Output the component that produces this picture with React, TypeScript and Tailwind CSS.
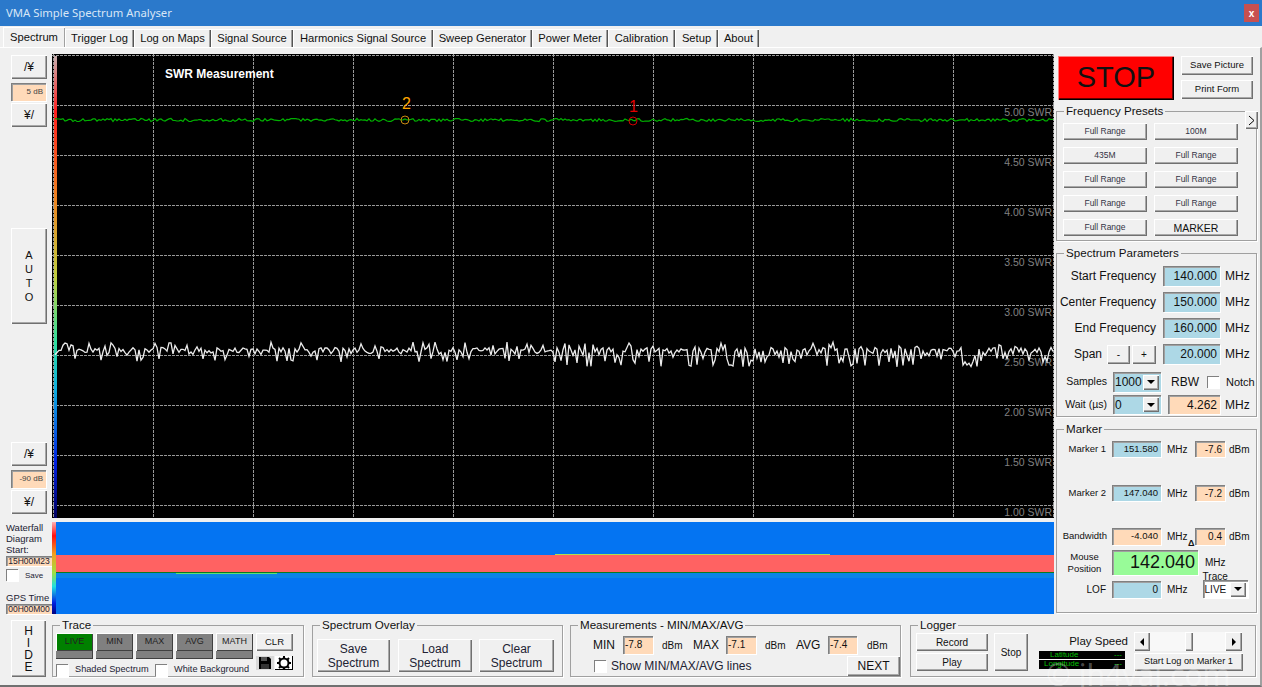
import React from 'react';

const bevel = 'bg-[#f0f0f0] shadow-[inset_1px_1px_0_#fff,inset_-1px_-1px_0_#707070,inset_-2px_-2px_0_#a8a8a8] flex items-center justify-center text-center';
const sunken = 'shadow-[inset_1px_1px_0_#808080,inset_2px_2px_0_#a0a0a0,1px_1px_0_#fff]';

const tabs = [
  { label: 'Trigger Log', width: 'w-[69px]' },
  { label: 'Log on Maps', width: 'w-[77px]' },
  { label: 'Signal Source', width: 'w-[82px]' },
  { label: 'Harmonics Signal Source', width: 'w-[140px]' },
  { label: 'Sweep Generator', width: 'w-[99px]' },
  { label: 'Power Meter', width: 'w-[76px]' },
  { label: 'Calibration', width: 'w-[67px]' },
  { label: 'Setup', width: 'w-[43px]' },
  { label: 'About', width: 'w-[41px]' },
];

const presets = ['Full Range', '100M', '435M', 'Full Range', 'Full Range', 'Full Range', 'Full Range', 'Full Range', 'Full Range', 'MARKER'];

const gridX = [1, 101, 201, 301, 401, 501, 601, 701, 801, 901, 1001];
const gridY = [1, 51, 101, 151, 201, 251, 301, 351, 401, 451];
const swr = ['5.00', '4.50', '4.00', '3.50', '3.00', '2.50', '2.00', '1.50', '1.00'];

// seeded noise so the traces stay the same on every render
function makeNoise(seed: number) {
  let s = seed;
  return () => {
    s = (s * 16807) % 2147483647;
    return s / 2147483647;
  };
}

function greenTrace() {
  const r = makeNoise(77);
  const pts: string[] = [];
  for (let x = 3; x <= 1001; x += 2) pts.push(`${x},${(66 + (r() - 0.5) * 3).toFixed(1)}`);
  return pts.join(' ');
}

function whiteTrace() {
  const r = makeNoise(4242);
  const pts: string[] = [];
  for (let x = 3; x <= 1001; x += 2) {
    const heavy = x > 500 ? 0.42 : 0.24;
    const k = r();
    let y = 296 + (r() - 0.5) * 5;
    if (k < heavy) y = 298 + r() * (x > 500 ? 15 : 10);
    else if (k > 0.88) y = 293 - r() * 5;
    pts.push(`${x},${y.toFixed(1)}`);
  }
  return pts.join(' ');
}

const greenPts = greenTrace();
const whitePts = whiteTrace();

function Btn({ className = '', children }: { className?: string; children: React.ReactNode }) {
  return <div className={`${bevel} ${className}`}>{children}</div>;
}

function Field({ className = '', children }: { className?: string; children?: React.ReactNode }) {
  return <div className={`${sunken} flex items-center justify-end pr-[3px] ${className}`}>{children}</div>;
}

function Check({ className = '' }: { className?: string }) {
  return <div className={`w-[12px] h-[12px] bg-white shrink-0 shadow-[inset_1px_1px_0_#808080,1px_1px_0_#fff] ${className}`} />;
}

function Group({ title, className = '', children }: { title: string; className?: string; children: React.ReactNode }) {
  return (
    <fieldset className={`border border-[#a0a0a0] shadow-[1px_1px_0_#fff] min-w-0 shrink-0 ${className}`}>
      <legend className="ml-[7px] px-[2px] text-[11.6px] leading-[14px] text-[#111]">{title}</legend>
      {children}
    </fieldset>
  );
}

function Arrow({ dir }: { dir: 'down' | 'left' | 'right' }) {
  const pts = dir === 'down' ? '0,0 8,0 4,4' : dir === 'left' ? '5,0 5,8 1,4' : '1,0 1,8 5,4';
  return (
    <svg width={dir === 'down' ? 8 : 6} height={dir === 'down' ? 4 : 8}>
      <polygon points={pts} fill="#000" />
    </svg>
  );
}

function Combo({ value, bg, className = '' }: { value: string; bg: string; className?: string }) {
  return (
    <div className={`${sunken} ${bg} flex items-center pl-[2px] pr-[2px] shrink-0 ${className}`}>
      <span className="flex-1">{value}</span>
      <Btn className="w-[16px] h-[15px]">
        <Arrow dir="down" />
      </Btn>
    </div>
  );
}

function Stepper({ value }: { value: string }) {
  return (
    <div className="flex flex-col ml-[11px] w-[36px]">
      <Btn className="h-[24px] text-[12px]">/¥</Btn>
      <div className={`${sunken} mt-[4px] h-[18px] w-[35px] bg-[#ffdab9] flex items-center justify-end pr-[3px] text-[8px] text-[#444]`}>{value}</div>
      <Btn className="h-[24px] mt-[2px] text-[12px]">¥/</Btn>
    </div>
  );
}

function Chart() {
  return (
    <svg width={1002} height={464} className="block bg-black">
      <defs>
        <linearGradient id="scale" x1="0" y1="0" x2="0" y2="1">
          <stop offset="0" stopColor="#c8b0b0" />
          <stop offset="0.12" stopColor="#ff2020" />
          <stop offset="0.3" stopColor="#f08020" />
          <stop offset="0.48" stopColor="#c0d040" />
          <stop offset="0.62" stopColor="#30e0a0" />
          <stop offset="0.72" stopColor="#10b0e0" />
          <stop offset="0.88" stopColor="#0020e0" />
          <stop offset="1" stopColor="#000060" />
        </linearGradient>
      </defs>
      {gridX.map(x => (
        <line key={x} x1={x + 0.5} y1={0} x2={x + 0.5} y2={464} stroke="#989898" strokeDasharray="3 1" />
      ))}
      {gridY.map(y => (
        <line key={y} x1={0} y1={y + 0.5} x2={1002} y2={y + 0.5} stroke="#989898" strokeDasharray="3 1" />
      ))}
      <rect x={2} y={2} width={3} height={462} fill="url(#scale)" />
      {swr.map((v, i) => (
        <text key={v} x={1000} y={62 + i * 50} textAnchor="end" fontSize={10.5} fill="#808080" fontFamily="Liberation Sans">
          {v} SWR
        </text>
      ))}
      <polyline points={whitePts} fill="none" stroke="#ececec" strokeWidth={1.3} />
      <polyline points={greenPts} fill="none" stroke="#00b000" strokeWidth={1.2} />
      <text x={113} y={24} fontSize={12} fontWeight={700} fill="#fff" fontFamily="Liberation Sans">SWR Measurement</text>
      <circle cx={353} cy={66} r={4} fill="none" stroke="#c88a10" />
      <text x={350} y={55} fontSize={16} fill="#ffa500" fontFamily="Liberation Sans">2</text>
      <circle cx={581} cy={67} r={4} fill="none" stroke="#d00000" />
      <text x={577} y={58} fontSize={16} fill="#e00000" fontFamily="Liberation Sans">1</text>
    </svg>
  );
}

function Waterfall() {
  return (
    <svg width={1002} height={92} className="block">
      <defs>
        <linearGradient id="scale2" x1="0" y1="0" x2="0" y2="1">
          <stop offset="0" stopColor="#ffb0b0" />
          <stop offset="0.15" stopColor="#ff1010" />
          <stop offset="0.35" stopColor="#f0a020" />
          <stop offset="0.55" stopColor="#a0e040" />
          <stop offset="0.7" stopColor="#20e0e0" />
          <stop offset="0.88" stopColor="#0020e0" />
          <stop offset="1" stopColor="#000080" />
        </linearGradient>
      </defs>
      <rect x={0} y={0} width={1002} height={92} fill="#0474f2" />
      <rect x={0} y={33} width={1002} height={17} fill="#ff6262" />
      <rect x={0} y={50} width={1002} height={1} fill="#0a7a20" />
      <rect x={0} y={51} width={1002} height={5} fill="#0c84e8" />
      <rect x={124} y={51} width={101} height={1} fill="#60e070" />
      <rect x={503} y={32} width={275} height={1} fill="#b0e050" />
      <rect x={0} y={0} width={4} height={92} fill="url(#scale2)" />
    </svg>
  );
}

function Floppy() {
  return (
    <svg width={14} height={14} viewBox="0 0 14 14">
      <path d="M1 1h10l2 2v10H1z" fill="#000" />
      <rect x={3} y={1} width={6} height={4} fill="#555" />
      <rect x={3} y={8} width={8} height={5} fill="#333" />
    </svg>
  );
}

function Gear() {
  return (
    <svg width={16} height={14} viewBox="0 0 16 14">
      <g stroke="#000" strokeWidth={2}>
        <line x1={8} y1={0} x2={8} y2={14} />
        <line x1={1} y1={7} x2={15} y2={7} />
        <line x1={3} y1={2} x2={13} y2={12} />
        <line x1={13} y1={2} x2={3} y2={12} />
      </g>
      <circle cx={8} cy={7} r={4.5} fill="#fff" stroke="#000" strokeWidth={2} />
    </svg>
  );
}

function TraceBtn({ label, top }: { label: string; top: string }) {
  return (
    <div className="w-[37px] flex flex-col">
      <div className={`h-[18px] ${top} flex items-center justify-center text-[9px] text-[#222] shadow-[inset_1px_1px_0_#fff,inset_-1px_-1px_0_#404040]`}>{label}</div>
      <div className="h-[8px] bg-[#808080] shadow-[inset_-1px_-1px_0_#404040]" />
    </div>
  );
}

export default function App() {
  return (
    <div className="relative w-[1262px] h-[687px] overflow-hidden bg-[#f0f0f0] text-[#111] font-['Liberation_Sans',Arial,sans-serif] flex flex-col">
      <div className="h-[26px] shrink-0 bg-[#2b79cb] flex items-center justify-between pl-[6px] pr-[3px]">
        <span className="text-[11.3px] text-[#d8e6f6] font-['Noto_Sans',sans-serif]">VMA Simple Spectrum Analyser</span>
        <div className="w-[15px] h-[18px] bg-[#c75050] text-white text-[10px] font-bold flex items-center justify-center">x</div>
      </div>

      <div className="h-[21px] shrink-0 flex items-end pl-[3px] text-[11.2px]">
        <div className="w-[62px] h-[20px] bg-[#f0f0f0] shadow-[inset_1px_1px_0_#fff,inset_-1px_0_0_#a0a0a0] flex items-start justify-center pt-[2px]">Spectrum</div>
        {tabs.map(t => (
          <div key={t.label} className={`${t.width} h-[18px] shadow-[inset_1px_1px_0_#fff,inset_-1px_0_0_#555,inset_-2px_0_0_#a0a0a0] flex items-center justify-center`}>
            {t.label}
          </div>
        ))}
      </div>

      <div className="flex-1 flex flex-col border-t border-t-white border-l-2 border-l-[#f8f8f8] border-r-2 border-r-[#a0a0a0] border-b-2 border-b-[#707070] -ml-[2px]">
        <div className="h-[570px] shrink-0 flex">
          <div className="w-[52px] shrink-0 flex flex-col pt-[7px]">
            <Stepper value="5 dB" />
            <Btn className="ml-[11px] w-[36px] h-[96px] mt-[101px] text-[11px] leading-[14px] flex-col">
              <span>A</span>
              <span>U</span>
              <span>T</span>
              <span>O</span>
            </Btn>
            <div className="mt-[118px]">
              <Stepper value="-90 dB" />
            </div>
            <div className="mt-[8px] ml-[6px] text-[9.5px] leading-[11px] text-[#223]">
              <div>Waterfall</div>
              <div>Diagram</div>
              <div>Start:</div>
              <div className={`${sunken} mt-[1px] w-[46px] h-[10px] bg-[#ffdab9] text-[8.5px] leading-[10px] text-center`}>15H00M23</div>
              <div className="flex items-center mt-[3px]">
                <Check />
                <span className="ml-[7px] text-[8px]">Save</span>
              </div>
              <div className="mt-[11px]">GPS Time</div>
              <div className={`${sunken} mt-[1px] w-[46px] h-[10px] bg-[#ffdab9] text-[8.5px] leading-[10px] text-center`}>00H00M00</div>
            </div>
          </div>

          <div className="w-[1002px] shrink-0 flex flex-col pt-[6px]">
            <Chart />
            <div className="mt-[4px]">
              <Waterfall />
            </div>
          </div>

          <div className="w-[204px] shrink-0 flex flex-col pt-[8px] pl-[2px]">
            <div className="flex pl-[2px]">
              <div className="w-[116px] h-[44px] bg-[#ff0000] shadow-[inset_1px_1px_0_#ff8080,inset_-1px_-1px_0_#000,inset_-2px_-2px_0_#600] flex items-center justify-center text-[29px] text-[#111]">STOP</div>
              <div className="ml-[7px] flex flex-col gap-[5px]">
                <Btn className="w-[72px] h-[19px] text-[9.5px]">Save Picture</Btn>
                <Btn className="w-[72px] h-[19px] text-[9.5px]">Print Form</Btn>
              </div>
            </div>

            <div className="relative mt-[4px]">
              <Group title="Frequency Presets" className="w-[201px] h-[137px]">
                <div className="grid grid-cols-[84px_84px] gap-x-[7px] gap-y-[7px] pl-[6px] pt-[5px]">
                  {presets.map((p, i) => (
                    <Btn key={i} className={`h-[17px] ${p === 'MARKER' ? 'text-[10.5px] pt-[3px]' : 'text-[8.5px] text-[#334]'}`}>{p}</Btn>
                  ))}
                </div>
              </Group>
              <Btn className="absolute left-[189px] top-[7px] w-[13px] h-[18px]">
                <svg width={7} height={11}>
                  <polyline points="1,1 6,5.5 1,10" fill="none" stroke="#000" />
                </svg>
              </Btn>
            </div>

            <Group title="Spectrum Parameters" className="w-[201px] h-[171px] mt-[5px]">
              <div className="flex flex-col pt-[6px] text-[12px]">
                {[
                  ['Start Frequency', '140.000'],
                  ['Center Frequency', '150.000'],
                  ['End Frequency', '160.000'],
                ].map(([label, val]) => (
                  <div key={label} className="flex items-center h-[20px] mb-[6px]">
                    <span className="w-[99px] text-right whitespace-nowrap">{label}</span>
                    <Field className="ml-[7px] w-[57px] h-[20px] bg-[#add8e6] text-[12px]">{val}</Field>
                    <span className="ml-[5px]">MHz</span>
                  </div>
                ))}
                <div className="flex items-center h-[20px]">
                  <span className="w-[45px] text-right">Span</span>
                  <Btn className="ml-[5px] w-[23px] h-[19px] text-[10px]">-</Btn>
                  <Btn className="ml-[2px] w-[24px] h-[19px] text-[10px]">+</Btn>
                  <Field className="ml-[7px] w-[57px] h-[20px] bg-[#add8e6] text-[12px]">20.000</Field>
                  <span className="ml-[5px]">MHz</span>
                </div>
                <div className="flex items-center h-[20px] mt-[8px]">
                  <span className="w-[50px] text-right text-[10.5px]">Samples</span>
                  <Combo value="1000" bg="bg-[#add8e6]" className="ml-[6px] w-[48px] h-[20px] text-[12px]" />
                  <span className="ml-[10px] w-[25px]">RBW</span>
                  <Check className="ml-[11px]" />
                  <span className="ml-[7px] text-[11px]">Notch</span>
                </div>
                <div className="flex items-center h-[19px] mt-[3px]">
                  <span className="w-[50px] text-right text-[10.5px]">Wait (µs)</span>
                  <Combo value="0" bg="bg-[#add8e6]" className="ml-[6px] w-[48px] h-[19px] text-[12px]" />
                  <Field className="ml-[7px] w-[52px] h-[19px] bg-[#ffdab9] text-[12px]">4.262</Field>
                  <span className="ml-[5px]">MHz</span>
                </div>
              </div>
            </Group>

            <Group title="Marker" className="w-[201px] h-[191px] mt-[5px]">
              <div className="flex flex-col pt-[5px] text-[10px]">
                <div className="flex items-center h-[16px]">
                  <span className="w-[49px] text-right text-[9.5px]">Marker 1</span>
                  <Field className="ml-[6px] w-[49px] h-[16px] bg-[#add8e6] text-[9.5px]">151.580</Field>
                  <span className="ml-[6px] w-[28px]">MHz</span>
                  <Field className="w-[30px] h-[16px] bg-[#ffdab9]">-7.6</Field>
                  <span className="ml-[4px]">dBm</span>
                </div>
                <div className="flex items-center h-[16px] mt-[28px]">
                  <span className="w-[49px] text-right text-[9.5px]">Marker 2</span>
                  <Field className="ml-[6px] w-[49px] h-[16px] bg-[#add8e6] text-[9.5px]">147.040</Field>
                  <span className="ml-[6px] w-[28px]">MHz</span>
                  <Field className="w-[30px] h-[16px] bg-[#ffdab9]">-7.2</Field>
                  <span className="ml-[4px]">dBm</span>
                </div>
                <div className="relative flex items-center h-[17px] mt-[27px]">
                  <span className="w-[50px] text-right text-[9.5px]">Bandwidth</span>
                  <Field className="ml-[5px] w-[49px] h-[17px] bg-[#ffdab9] text-[9.5px]">-4.040</Field>
                  <span className="ml-[6px] w-[28px]">MHz</span>
                  <Field className="w-[30px] h-[17px] bg-[#ffdab9]">0.4</Field>
                  <span className="ml-[4px]">dBm</span>
                  <span className="absolute left-[131px] top-[9px] text-[9px] font-bold">Δ</span>
                </div>
                <div className="flex items-center h-[25px] mt-[5px]">
                  <span className="w-[49px] text-center leading-[12px] pl-[6px] text-[9.5px]">Mouse Position</span>
                  <Field className="ml-[6px] w-[86px] h-[25px] bg-[#98fb98] text-[18px]">142.040</Field>
                  <span className="ml-[7px]">MHz</span>
                </div>
                <div className="flex items-center h-[18px] mt-[5px]">
                  <span className="w-[49px] text-right">LOF</span>
                  <Field className="ml-[6px] w-[49px] h-[17px] bg-[#add8e6]">0</Field>
                  <span className="ml-[6px]">MHz</span>
                  <div className="relative ml-[15px]">
                    <span className="absolute left-0 -top-[8px] text-[10px] leading-[10px]">Trace</span>
                    <Combo value="LIVE" bg="bg-white" className="w-[45px] h-[18px] text-[10px]" />
                  </div>
                </div>
              </div>
            </Group>
          </div>
        </div>

        <div className="flex-1 flex">
          <Btn className="ml-[11px] mt-[2px] w-[35px] h-[57px] text-[12px] leading-[12px] flex-col">
            <span>H</span>
            <span>I</span>
            <span>D</span>
            <span>E</span>
          </Btn>

          <Group title="Trace" className="ml-[6px] w-[252px] h-[59px]">
            <div className="flex pl-[3px] pt-[1px]">
              <div className="flex flex-col">
                <div className="flex gap-[3px]">
                  <TraceBtn label="LIVE" top="bg-[#008000]" />
                  <TraceBtn label="MIN" top="bg-[#808080]" />
                  <TraceBtn label="MAX" top="bg-[#808080]" />
                  <TraceBtn label="AVG" top="bg-[#808080]" />
                  <TraceBtn label="MATH" top="bg-[#d3d3d3]" />
                </div>
                <div className="flex items-center mt-[4px] text-[9.2px] text-[#223]">
                  <Check />
                  <span className="ml-[7px] w-[80px] whitespace-nowrap">Shaded Spectrum</span>
                  <Check />
                  <span className="ml-[7px] whitespace-nowrap">White Background</span>
                </div>
              </div>
              <div className="ml-[3px] flex flex-col">
                <Btn className="w-[37px] h-[18px] text-[9.5px]">CLR</Btn>
                <div className="flex mt-[5px] items-center">
                  <div className="w-[18px] h-[14px] flex items-center justify-center bg-[#d8d8d8]">
                    <Floppy />
                  </div>
                  <div className="ml-[1px] w-[18px] h-[14px] flex items-center justify-center bg-white shadow-[inset_-1px_-1px_0_#000]">
                    <Gear />
                  </div>
                </div>
              </div>
            </div>
          </Group>

          <Group title="Spectrum Overlay" className="ml-[8px] w-[251px] h-[59px]">
            <div className="flex pl-[4px] pt-[7px] text-[12px] leading-[14px] text-[#223]">
              <Btn className="w-[73px] h-[33px]">Save<br />Spectrum</Btn>
              <Btn className="ml-[8px] w-[74px] h-[33px]">Load<br />Spectrum</Btn>
              <Btn className="ml-[7px] w-[75px] h-[33px]">Clear<br />Spectrum</Btn>
            </div>
          </Group>

          <Group title="Measurements - MIN/MAX/AVG" className="ml-[7px] w-[331px] h-[59px]">
            <div className="flex items-center pl-[22px] pt-[4px] text-[12px]">
              <span className="w-[19px]">MIN</span>
              <div className={`${sunken} ml-[11px] w-[30px] h-[18px] bg-[#ffdab9] text-[10px] leading-[18px] pl-[2px]`}>-7.8</div>
              <span className="ml-[9px] w-[20px] text-[10px]">dBm</span>
              <span className="ml-[11px] w-[23px]">MAX</span>
              <div className={`${sunken} ml-[10px] w-[30px] h-[18px] bg-[#ffdab9] text-[10px] leading-[18px] pl-[2px]`}>-7.1</div>
              <span className="ml-[9px] w-[20px] text-[10px]">dBm</span>
              <span className="ml-[11px] w-[24px]">AVG</span>
              <div className={`${sunken} ml-[8px] w-[29px] h-[18px] bg-[#ffdab9] text-[10px] leading-[18px] pl-[2px]`}>-7.4</div>
              <span className="ml-[10px] text-[10px]">dBm</span>
            </div>
            <div className="flex items-center mt-[2px] text-[12px]">
              <Check className="ml-[23px]" />
              <span className="ml-[5px] text-[#223]">Show MIN/MAX/AVG lines</span>
              <Btn className="ml-auto w-[53px] h-[20px] text-[12px]">NEXT</Btn>
            </div>
          </Group>

          <Group title="Logger" className="ml-[9px] w-[346px] h-[59px]">
            <div className="flex pl-[5px] pt-[1px]">
              <div className="flex flex-col gap-[2px]">
                <Btn className="w-[72px] h-[18px] text-[10px]">Record</Btn>
                <Btn className="w-[72px] h-[18px] text-[10px]">Play</Btn>
              </div>
              <Btn className="ml-[6px] w-[34px] h-[38px] text-[10px]">Stop</Btn>
              <div className="ml-[11px] -mt-[1px] w-[89px] flex flex-col">
                <div className="h-[19px] text-[11.5px] text-right whitespace-nowrap flex items-center justify-end">Play Speed</div>
                <div className="w-[86px] h-[18px] bg-black flex flex-col text-[8px] leading-[8.5px] text-[#00c000]">
                  <div className="h-[9px] border-b border-b-white flex justify-between pl-[11px] pr-[3px]">
                    <span>Latitude</span>
                    <span>---</span>
                  </div>
                  <div className="h-[9px] flex justify-between pl-[5px] pr-[3px]">
                    <span>Longitude</span>
                    <span>---</span>
                  </div>
                </div>
              </div>
              <div className="ml-[6px] -mt-[1px] flex flex-col">
                <div className="w-[108px] h-[19px] bg-[#f8f8f8] flex justify-between relative">
                  <Btn className="w-[16px] h-[19px]"><Arrow dir="left" /></Btn>
                  <Btn className="absolute left-[51px] top-0 w-[8px] h-[19px]"> </Btn>
                  <Btn className="w-[17px] h-[19px]"><Arrow dir="right" /></Btn>
                </div>
                <Btn className="w-[109px] h-[18px] mt-[2px] text-[9.2px]">Start Log on Marker 1</Btn>
              </div>
            </div>
          </Group>
        </div>
      </div>

      <div className="absolute left-[1046px] top-[657px] text-[30px] leading-[36px] text-white/30 whitespace-nowrap pointer-events-none font-['Noto_Sans',sans-serif]">© jh4vaj.com</div>
    </div>
  );
}
